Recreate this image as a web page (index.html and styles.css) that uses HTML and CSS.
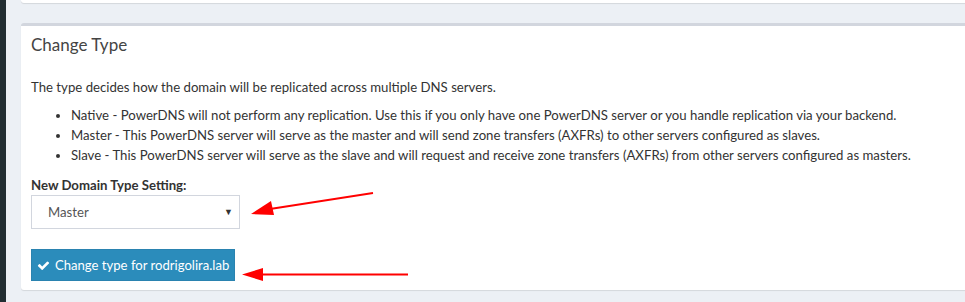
FILE: index.html
```html
<!DOCTYPE html>
<html lang="en">
<head>
    <meta charset="UTF-8">
    <title>Change Type</title>
    <link rel="stylesheet" href="styles.css">
</head>
<body>

<div class="wrapper">
    <aside class="sidebar"></aside>

    <div class="content">
        <div class="box box-top"></div>

        <div class="box">
            <div class="box-header">
                <h3 class="box-title">Change Type</h3>
            </div>
            <div class="box-body">
                <p>The type decides how the domain will be replicated across multiple DNS servers.</p>
                <ul>
                    <li>Native - PowerDNS will not perform any replication. Use this if you only have one PowerDNS server or you handle replication via your backend.</li>
                    <li>Master - This PowerDNS server will serve as the master and will send zone transfers (AXFRs) to other servers configured as slaves.</li>
                    <li>Slave - This PowerDNS server will serve as the slave and will request and receive zone transfers (AXFRs) from other servers configured as masters.</li>
                </ul>
                <label class="form-label">New Domain Type Setting:</label>
                <div class="select-box">
                    <span>Master</span>
                    <span class="caret">&#9660;</span>
                </div>
                <button class="btn-primary">
                    <svg class="icon-check" viewBox="0 0 1792 1792" width="13" height="13"><path fill="#fff" d="M1671 566q0 40-28 68l-724 724-136 136q-28 28-68 28t-68-28l-136-136-362-362q-28-28-28-68t28-68l136-136q28-28 68-28t68 28l294 295 656-657q28-28 68-28t68 28l136 136q28 28 28 68z"/></svg>
                    Change type for rodrigolira.lab
                </button>
            </div>
        </div>
    </div>

    <!-- anotaciones en rojo -->
    <svg class="arrows" width="965" height="302">
        <line x1="373" y1="193" x2="270" y2="209" stroke="#f00" stroke-width="2"/>
        <polygon points="251,214 271,201 274,215" fill="#f00"/>
        <line x1="408" y1="274.5" x2="260" y2="274.5" stroke="#f00" stroke-width="2"/>
        <polygon points="242,274.5 263,268 263,281" fill="#f00"/>
    </svg>
</div>

</body>
</html>
```

FILE: styles.css
```css
body {
    margin: 0;
    font-family: Lato, sans-serif;
    font-size: 13.2px;
    line-height: 20px;
    color: #333;
    background-color: #ecf0f5;
    overflow: hidden;
}

.wrapper {
    display: flex;
    height: 302px;
    position: relative;
}

.sidebar {
    width: 6px;
    flex: none;
    background-color: #222d32;
}

.content {
    flex: 1;
    padding-left: 15px;
    display: flex;
    flex-direction: column;
    gap: 20px;
    margin-right: -4px;
}

.box {
    flex: none;
    background-color: #fff;
    border-top: 3px solid #d2d6de;
    border-radius: 3px;
    box-shadow: 0 1px 1px rgba(0, 0, 0, 0.1);
}

.box-top {
    border-top: none;
    height: 3px;
    border-radius: 0 0 3px 3px;
}

.box-header {
    padding: 10px;
}

.box-title {
    margin: 0;
    font-size: 17px;
    font-weight: normal;
    line-height: 18px;
    color: #444;
}

.box-body {
    padding: 13px 10px 9px;
}

p {
    margin: 0 0 8px;
}

ul {
    margin: 0 0 10px;
    padding-left: 40px;
}

.form-label {
    display: block;
    font-weight: bold;
}

.select-box {
    height: 32px;
    border: 1px solid #d2d6de;
    display: flex;
    align-items: center;
    justify-content: space-between;
    padding: 0 6px 0 16px;
    width: 185px;
    color: #555;
}

.caret {
    font-size: 9px;
    color: #333;
}

.btn-primary {
    display: flex;
    align-items: center;
    gap: 5px;
    margin-top: 20px;
    height: 32px;
    padding: 0 5px 0 5px;
    background-color: #2b8cbb;
    border: 1px solid #2a83b0;
    color: #fff;
    font-family: inherit;
    font-size: 13.1px;
    cursor: pointer;
}

.arrows {
    position: absolute;
    left: 0;
    top: 0;
    pointer-events: none;
}
```
